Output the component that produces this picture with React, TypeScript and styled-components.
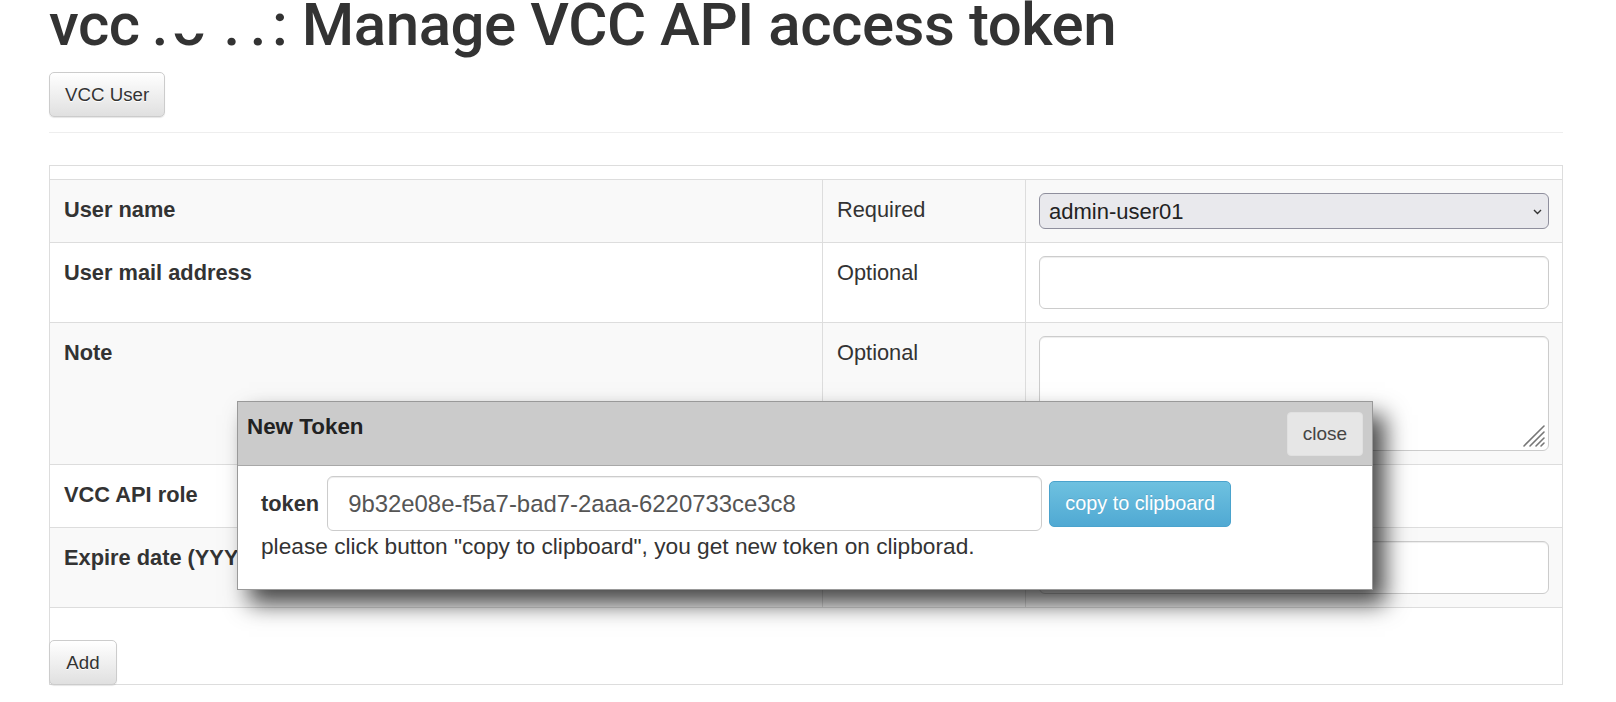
import React from "react";
import styled, { createGlobalStyle } from "styled-components";

const GlobalStyle = createGlobalStyle`
  html, body { margin: 0; padding: 0; background: #fff; }
  body {
    font-family: "Liberation Sans", Arial, sans-serif;
    color: #333;
    overflow: hidden;
  }
  * { box-sizing: border-box; }
`;

const Page = styled.div`
  position: relative;
  width: 1616px;
  height: 702px;
  padding-left: 49px;
  overflow: hidden;
`;

const Container = styled.div`
  width: 1514px;
`;

const Title = styled.h1`
  margin: -5px 0 0;
  font-family: Roboto, "Liberation Sans", sans-serif;
  font-weight: 500;
  font-size: 60px;
  line-height: 60px;
  letter-spacing: -0.45px;
  color: #333;
  white-space: nowrap;
`;

const Gap = styled.span<{ $w: number }>`
  display: inline-block;
  width: ${(p) => p.$w}px;
`;

const Clipped = styled.span`
  display: inline-block;
  clip-path: inset(64% 0 0 0);
`;

const Btn = styled.button`
  font-family: "Liberation Sans", Arial, sans-serif;
  font-size: 18.7px;
  line-height: 27px;
  color: #333;
  padding: 8px 15px;
  white-space: nowrap;
  border: 1px solid #ccc;
  border-radius: 5px;
  background: linear-gradient(to bottom, #fff 0%, #e0e0e0 100%);
  text-shadow: 0 1px 0 #fff;
  box-shadow: inset 0 1px 0 rgba(255, 255, 255, 0.15), 0 1px 1px rgba(0, 0, 0, 0.1);
  cursor: pointer;
`;

const TopBtn = styled(Btn)`
  display: block;
  margin-top: 17px;
  height: 45px;
`;

const Rule = styled.hr`
  margin: 15px 0 0;
  border: 0;
  border-top: 1px solid #eee;
`;

const Panel = styled.div`
  margin-top: 32px;
  border: 1px solid #ddd;
  padding-top: 13px;
  height: 520px;
  display: flex;
  flex-direction: column;
`;

const Table = styled.div`
  border-top: 1px solid #ddd;
`;

const Row = styled.div<{ $striped?: boolean }>`
  display: grid;
  grid-template-columns: 772px 203px 1fr;
  border-bottom: 1px solid #ddd;
  background: ${(p) => (p.$striped ? "#f9f9f9" : "#fff")};
`;

const Cell = styled.div<{ $first?: boolean }>`
  padding: 15px 14px 13px;
  font-size: 21.8px;
  line-height: 30px;
  border-left: ${(p) => (p.$first ? "none" : "1px solid #ddd")};
`;

const LabelCell = styled(Cell)`
  font-weight: bold;
  white-space: nowrap;
  overflow: hidden;
`;

const FieldCell = styled(Cell)`
  padding: 13px;
`;

const SelectWrap = styled.div<{ $w?: number }>`
  position: relative;
  width: ${(p) => (p.$w ? `${p.$w}px` : "100%")};
`;

const Select = styled.select`
  appearance: none;
  -webkit-appearance: none;
  display: block;
  width: 100%;
  height: 36px;
  padding: 0 30px 0 9px;
  font-family: "Liberation Sans", Arial, sans-serif;
  font-size: 22px;
  color: #222;
  background: #e9e9ed;
  border: 1px solid #8f8f9d;
  border-radius: 6px;
`;

const Chevron = styled.svg`
  position: absolute;
  right: 7px;
  top: 16px;
  pointer-events: none;
`;

const TextInput = styled.input`
  display: block;
  width: 100%;
  height: 53px;
  padding: 0 14px;
  font-family: "Liberation Sans", Arial, sans-serif;
  font-size: 21.8px;
  color: #555;
  background: #fff;
  border: 1px solid #ccc;
  border-radius: 6px;
  box-shadow: inset 0 1px 1px rgba(0, 0, 0, 0.075);
`;

const AreaWrap = styled.div`
  position: relative;
`;

const TextArea = styled.textarea`
  display: block;
  width: 100%;
  height: 115px;
  resize: none;
  padding: 8px 14px;
  font-family: "Liberation Sans", Arial, sans-serif;
  font-size: 21.8px;
  background: #fff;
  border: 1px solid #ccc;
  border-radius: 6px;
  box-shadow: inset 0 1px 1px rgba(0, 0, 0, 0.075);
`;

const Grip = styled.svg`
  position: absolute;
  right: 3px;
  bottom: 3px;
  pointer-events: none;
`;

const AddBtn = styled(Btn)`
  margin-top: auto;
  align-self: flex-start;
  margin-left: -1px;
  margin-bottom: -1px;
  height: 45px;
  width: 68px;
  padding: 8px 0;
`;

/* Modal */
const Modal = styled.div`
  position: absolute;
  left: 237px;
  top: 401px;
  width: 1136px;
  height: 189px;
  background: #fff;
  border: 1px solid #999;
  box-shadow: 12px 14px 22px rgba(0, 0, 0, 0.72);
  display: flex;
  flex-direction: column;
`;

const ModalHeader = styled.div`
  display: flex;
  justify-content: space-between;
  align-items: flex-start;
  background: #cbcbcb;
  border-bottom: 1px solid #a8a8a8;
  padding: 10px 9px;
  height: 64px;
`;

const ModalTitle = styled.div`
  font-weight: bold;
  font-size: 22.4px;
  line-height: 30px;
  color: #222;
`;

const CloseBtn = styled.button`
  width: 76px;
  height: 44px;
  font-family: "Liberation Sans", Arial, sans-serif;
  font-size: 19px;
  color: #444;
  background: #e6e6e6;
  border: 1px solid #e0e0e0;
  border-radius: 4px;
  padding: 0;
`;

const ModalBody = styled.div`
  padding: 10px 23px 0 23px;
`;

const TokenRow = styled.div`
  display: flex;
  align-items: center;
`;

const TokenLabel = styled.span`
  font-weight: bold;
  font-size: 21.8px;
  line-height: 30px;
  margin-right: 8px;
  color: #333;
`;

const TokenInput = styled(TextInput)`
  width: 715px;
  height: 55px;
  padding: 0 20px;
  font-size: 23.9px;
`;

const CopyBtn = styled.button`
  margin-left: 7px;
  width: 182px;
  height: 46px;
  padding: 0;
  font-family: "Liberation Sans", Arial, sans-serif;
  font-size: 19.8px;
  color: #fff;
  background: linear-gradient(to bottom, #6ec1e0 0%, #50a9d3 100%);
  border: 1px solid #4aa3cd;
  border-radius: 5px;
  text-shadow: 0 -1px 0 rgba(0, 0, 0, 0.1);
`;

const Hint = styled.div`
  font-size: 22.7px;
  line-height: 30px;
  color: #333;
  white-space: nowrap;
`;

const ChevronIcon = () => (
  <Chevron width="9" height="6" viewBox="0 0 9 6">
    <path d="M1 1 L4.5 4.5 L8 1" fill="none" stroke="#333" strokeWidth="1.4" />
  </Chevron>
);

const rows = [
  { label: "User name", req: "Required", kind: "select", striped: true },
  { label: "User mail address", req: "Optional", kind: "input", striped: false },
  { label: "Note", req: "Optional", kind: "textarea", striped: true },
  { label: "VCC API role", req: "Required", kind: "role", striped: false },
  { label: "Expire date (YYYY-MM-DD)", req: "Optional", kind: "input", striped: true },
];

function Field({ kind }: { kind: string }) {
  if (kind === "select")
    return (
      <SelectWrap>
        <Select defaultValue="admin-user01">
          <option>admin-user01</option>
        </Select>
        <ChevronIcon />
      </SelectWrap>
    );
  if (kind === "role")
    return (
      <SelectWrap $w={300}>
        <Select defaultValue="user">
          <option>user</option>
        </Select>
        <ChevronIcon />
      </SelectWrap>
    );
  if (kind === "textarea")
    return (
      <AreaWrap>
        <TextArea />
        <Grip width="24" height="24" viewBox="0 0 24 24">
          <g stroke="#777" strokeWidth="1.6" strokeLinecap="round">
            <line x1="2" y1="22" x2="22" y2="2" />
            <line x1="8" y1="22" x2="22" y2="8" />
            <line x1="14" y1="22" x2="22" y2="14" />
            <line x1="19" y1="22" x2="22" y2="19" />
          </g>
        </Grip>
      </AreaWrap>
    );
  return <TextInput />;
}

export default function App() {
  return (
    <>
      <GlobalStyle />
      <Page>
        <Container>
          <Title>
            vcc<Gap $w={12} />.<Gap $w={4} /><Clipped>o</Clipped>
            <Gap $w={18} />.<Gap $w={10} />.<Gap $w={6} />: Manage VCC API access token
          </Title>
          <TopBtn>VCC User</TopBtn>
          <Rule />
          <Panel>
            <Table>
              {rows.map((r) => (
                <Row key={r.label} $striped={r.striped}>
                  <LabelCell $first>{r.label}</LabelCell>
                  <Cell>{r.req}</Cell>
                  <FieldCell>
                    <Field kind={r.kind} />
                  </FieldCell>
                </Row>
              ))}
            </Table>
            <AddBtn>Add</AddBtn>
          </Panel>
        </Container>
        <Modal>
          <ModalHeader>
            <ModalTitle>New Token</ModalTitle>
            <CloseBtn>close</CloseBtn>
          </ModalHeader>
          <ModalBody>
            <TokenRow>
              <TokenLabel>token</TokenLabel>
              <TokenInput readOnly value="9b32e08e-f5a7-bad7-2aaa-6220733ce3c8" />
              <CopyBtn>copy to clipboard</CopyBtn>
            </TokenRow>
            <Hint>please click button "copy to clipboard", you get new token on clipborad.</Hint>
          </ModalBody>
        </Modal>
      </Page>
    </>
  );
}
